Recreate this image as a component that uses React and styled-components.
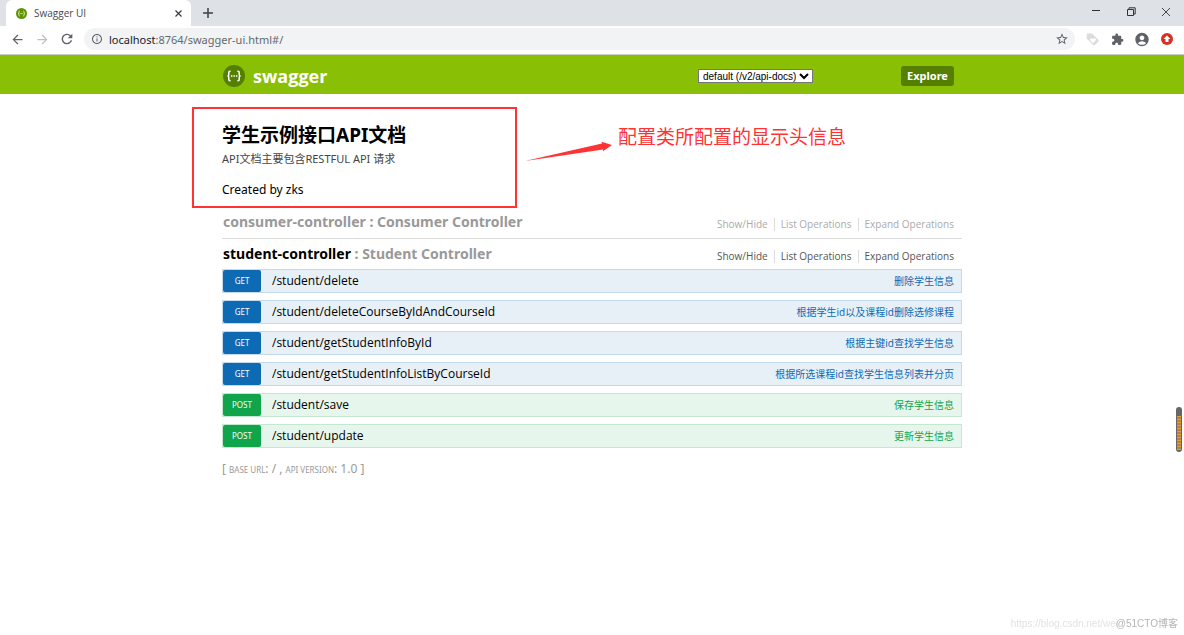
import { useState } from "react";
import styled, { createGlobalStyle } from "styled-components";
import { MdArrowBack, MdArrowForward, MdRefresh, MdInfoOutline, MdStarBorder, MdExtension, MdAccountCircle } from "react-icons/md";

const GlobalStyle = createGlobalStyle`
  * {
    box-sizing: border-box;
  }
  body {
    margin: 0;
    background: #fff;
    color: #000;
    font-family: "Noto Sans", "Noto Sans CJK SC", sans-serif;
  }
  a {
    color: inherit;
    text-decoration: none;
  }
  button {
    border: 0;
    padding: 0;
    background: none;
    color: inherit;
    font: inherit;
  }
`;

/* browser window */
const TabStrip = styled.div`
  display: flex;
  align-items: flex-start;
  height: 26px;
  padding-left: 6px;
  background: #dee1e6;
`;

const Tab = styled.div`
  display: flex;
  align-items: center;
  gap: 7px;
  width: 185px;
  height: 26px;
  padding: 0 8px 0 10px;
  border-radius: 6px 6px 0 0;
  background: #fff;
  color: #45494d;
  font-family: "Open Sans", sans-serif;
  font-size: 10px;
`;

const TabTitle = styled.span`
  flex: 1;
`;

const IconButton = styled.button`
  display: flex;
  align-items: center;
  justify-content: center;
  width: ${({ $width }) => $width || 16}px;
  height: 26px;
  color: ${({ $color }) => $color || "#5f6368"};
`;

const WindowButtons = styled.div`
  display: flex;
  gap: 19px;
  margin-left: auto;
  padding-right: 10px;
`;

const AddressBar = styled.div`
  display: flex;
  align-items: center;
  gap: 9px;
  height: 29px;
  padding: 0 9px 2px;
  border-bottom: 1px solid #c9cdc4;
`;

const Omnibox = styled.div`
  display: flex;
  flex: 1;
  align-items: center;
  gap: 6px;
  height: 22px;
  padding: 0 6px 0 7px;
  border-radius: 11px;
  background: #f1f3f4;
  color: #5f6368;
`;

const Url = styled.span`
  flex: 1;
  color: #65696d;
  font-size: 11px;

  b {
    color: #202124;
    font-weight: 400;
  }
`;

/* swagger page */
const Header = styled.header`
  background: #89bf04;
`;

const Wrap = styled.div`
  width: 740px;
  max-width: 100%;
  margin: 0 auto;
`;

const HeaderRow = styled(Wrap)`
  display: flex;
  align-items: center;
  height: 39px;
  padding: 3px 8px 0 1px;
`;

const Logo = styled.a`
  display: flex;
  flex: 1;
  align-items: center;
  gap: 8px;
  color: #fff;
  font-family: "Open Sans", sans-serif;
  font-size: 18px;
  font-weight: 700;
  line-height: 22px;
`;

const SpecSelect = styled.select`
  height: 14px;
  width: 115px;
  margin-right: 88px;
  padding: 0;
  border: 1px solid #767676;
  border-radius: 0;
  background: #fff;
  color: #000;
  font-family: "Liberation Sans", sans-serif;
  font-size: 10px;
`;

const ExploreButton = styled.button`
  width: 53px;
  height: 20px;
  border-radius: 3px;
  background: #547f00;
  color: #fff;
  font-size: 11px;
  font-weight: 700;
  line-height: 18px;
`;

const InfoRow = styled(Wrap)`
  position: relative;
  padding-top: 28px;
`;

const Info = styled.section`
  height: 89px;
`;

const Title = styled.h1`
  margin: 0;
  font-size: 19px;
  font-weight: 700;
  line-height: 26px;
`;

const Description = styled.p`
  margin: 3px 0 0;
  color: #444;
  font-size: 11px;
  line-height: 16px;
`;

const Author = styled.p`
  margin: 15px 0 0;
  font-size: 12px;
  line-height: 16px;
`;

const Frame = styled.div`
  position: absolute;
  top: 13px;
  left: -30px;
  width: 325px;
  height: 101px;
  border: 2px solid #f33;
`;

const Callout = styled.div`
  position: absolute;
  top: 29px;
  left: 302px;
  display: flex;
  gap: 5px;
  color: #f33;
  font-size: 19px;
  line-height: 28px;
  white-space: nowrap;
`;

const Resource = styled.section`
  padding-top: 1px;
  border-bottom: ${({ $open }) => ($open ? 0 : "1px solid #ddd")};
`;

const ResourceHeading = styled.div`
  display: flex;
  align-items: center;
  justify-content: space-between;
  height: ${({ $open }) => ($open ? 29 : 26)}px;
  padding: 0 0 ${({ $open }) => ($open ? 1 : 6)}px 1px;
  color: #999;
`;

const ResourceName = styled.h2`
  margin: 0;
  font-size: 14px;
  font-weight: 700;
  line-height: 24px;

  a {
    color: ${({ $open }) => ($open ? "#000" : "#999")};
  }
`;

const Options = styled.ul`
  display: flex;
  margin: 4px 0 0;
  padding: 0 2px 0 0;
  list-style: none;
  color: ${({ $open }) => ($open ? "#555" : "#aaa")};
  font-family: "Open Sans", sans-serif;
  font-size: 10px;
  line-height: 13px;

  li {
    padding: 0 6px;
    border-left: 1px solid #ddd;
  }
  li:first-child {
    border-left: 0;
  }
`;

const Operations = styled.ul`
  display: flex;
  flex-direction: column;
  gap: 7px;
  margin: 0;
  padding: 0;
  list-style: none;
`;

const palette = {
  get: { main: "#0f6ab4", back: "#e7f0f7", border: "#c3d9ec" },
  post: { main: "#10a54a", back: "#e7f6ec", border: "#c3e8d1" },
};

const OperationRow = styled.li`
  display: flex;
  align-items: center;
  height: 24px;
  border: 1px solid ${({ $method }) => palette[$method].border};
  background: ${({ $method }) => palette[$method].back};
`;

const Method = styled.a`
  width: 38px;
  border-radius: 2px;
  background: ${({ $method }) => palette[$method].main};
  color: #fff;
  font-size: 8px;
  line-height: 22px;
  text-align: center;
  text-transform: uppercase;
`;

const Path = styled.a`
  flex: 1;
  padding-left: 11px;
  font-family: "Open Sans", sans-serif;
  font-size: 12px;
  line-height: 20px;
`;

const Summary = styled.a`
  padding-right: 7px;
  color: ${({ $method }) => palette[$method].main};
  font-size: 10px;
  line-height: 20px;
`;

const Footer = styled.footer`
  margin-top: 12px;
  color: #999;
  font-size: 12px;
  line-height: 18px;

  span {
    font-size: 8px;
    text-transform: uppercase;
  }
`;

/* overlays */
const Gauge = styled.div`
  position: fixed;
  top: 407px;
  right: 2px;
  width: 6px;
  height: 45px;
  padding: 9px 1px 2px;
  border-radius: 3px;
  background: #666;
`;

const GaugeLevel = styled.div`
  height: 100%;
  background: repeating-linear-gradient(#f0982c 0 1px, #b98244 1px 3px);
`;

const Watermark = styled.div`
  position: fixed;
  right: ${({ $right }) => $right}px;
  bottom: 4px;
  color: ${({ $color }) => $color};
  font-family: "Liberation Sans", "Noto Sans CJK SC", sans-serif;
  font-size: 10px;
  line-height: 14px;
`;

function SwaggerMark({ size, circle }) {
  return (
    <svg width={size} height={size} viewBox="0 0 22 22" fill="none">
      <circle cx="11" cy="11" r="11" fill={circle} />
      <path
        d="M7.6 6.2H7C6 6.2 5.8 6.8 5.8 7.6V9.4C5.8 10.4 5.3 11 4.4 11C5.3 11 5.8 11.6 5.8 12.6V14.4C5.8 15.2 6 15.8 7 15.8H7.6M14.4 6.2H15C16 6.2 16.2 6.8 16.2 7.6V9.4C16.2 10.4 16.7 11 17.6 11C16.7 11 16.2 11.6 16.2 12.6V14.4C16.2 15.2 16 15.8 15 15.8H14.4"
        stroke="#fff"
        strokeWidth="1.5"
      />
      <path d="M7.9 11H14.4" stroke="#fff" strokeWidth="1.5" strokeDasharray="1.5 1" />
    </svg>
  );
}

const resources = [
  { name: "consumer-controller", description: "Consumer Controller", operations: [] },
  {
    name: "student-controller",
    description: "Student Controller",
    open: true,
    operations: [
      { method: "get", path: "/student/delete", summary: "删除学生信息" },
      { method: "get", path: "/student/deleteCourseByIdAndCourseId", summary: "根据学生id以及课程id删除选修课程" },
      { method: "get", path: "/student/getStudentInfoById", summary: "根据主键id查找学生信息" },
      { method: "get", path: "/student/getStudentInfoListByCourseId", summary: "根据所选课程id查找学生信息列表并分页" },
      { method: "post", path: "/student/save", summary: "保存学生信息" },
      { method: "post", path: "/student/update", summary: "更新学生信息" },
    ],
  },
];

function BrowserBar() {
  return (
    <>
      <TabStrip>
        <Tab>
          <SwaggerMark size={11} circle="#5f9300" />
          <TabTitle>Swagger UI</TabTitle>
          <IconButton $width={9} $color="#3c4043" aria-label="Close tab">
            <svg width="7" height="7" viewBox="0 0 7 7" stroke="currentColor" strokeWidth="1.3">
              <path d="M0.5 0.5L6.5 6.5M6.5 0.5L0.5 6.5" />
            </svg>
          </IconButton>
        </Tab>
        <IconButton $width={34} $color="#3c4043" aria-label="New tab">
          <svg width="10" height="10" viewBox="0 0 10 10" stroke="currentColor" strokeWidth="1.5">
            <path d="M5 0V10M0 5H10" />
          </svg>
        </IconButton>
        <WindowButtons>
          <IconButton aria-label="Minimize">
            <svg width="8" height="8" viewBox="0 0 8 8" stroke="#333">
              <path d="M0 1.5H8" />
            </svg>
          </IconButton>
          <IconButton aria-label="Restore">
            <svg width="9" height="12" viewBox="0 0 9 12" fill="none" stroke="#333">
              <path d="M0.5 2.5H6.5V8.5H0.5ZM2 2V0.8H8.2V7H7" />
            </svg>
          </IconButton>
          <IconButton aria-label="Close">
            <svg width="8" height="10" viewBox="0 0 8 10" stroke="#333" strokeWidth="0.9">
              <path d="M0 0L8 8M8 0L0 8" />
            </svg>
          </IconButton>
        </WindowButtons>
      </TabStrip>
      <AddressBar>
        <IconButton aria-label="Back">
          <MdArrowBack size={15} />
        </IconButton>
        <IconButton $color="#bdc1c6" aria-label="Forward">
          <MdArrowForward size={15} />
        </IconButton>
        <IconButton aria-label="Reload">
          <MdRefresh size={16} />
        </IconButton>
        <Omnibox>
          <MdInfoOutline size={12} />
          <Url>
            <b>localhost</b>:8764/swagger-ui.html#/
          </Url>
          <MdStarBorder size={14} />
        </Omnibox>
        <IconButton aria-label="Shopping extension">
          <svg width="13" height="13" viewBox="0 0 13 13">
            <path d="M1.5 0.5H6L12.5 7Q13 7.6 12.5 8.2L8.6 12.3Q8 12.8 7.4 12.3L0.7 5.6V1.5Q0.7 0.5 1.5 0.5Z" fill="#dcdcdc" />
            <path d="M7 10L4.4 7.4C3.2 6 5.3 4.3 7 6C8.7 4.3 10.8 6 9.6 7.4Z" fill="#fff" />
          </svg>
        </IconButton>
        <IconButton aria-label="Extensions">
          <MdExtension size={13} />
        </IconButton>
        <IconButton aria-label="Profile">
          <MdAccountCircle size={17} />
        </IconButton>
        <IconButton aria-label="Update">
          <svg width="12" height="12" viewBox="0 0 12 12">
            <circle cx="6" cy="6" r="6" fill="#d93025" />
            <path d="M6 2.5L9.5 6H7.5V9H4.5V6H2.5Z" fill="#fff" />
          </svg>
        </IconButton>
      </AddressBar>
    </>
  );
}

function ResourceSection({ name, description, open, operations }) {
  return (
    <Resource $open={open}>
      <ResourceHeading $open={open}>
        <ResourceName $open={open}>
          <a href={`#/${name}`}>{name}</a> : {description}
        </ResourceName>
        <Options $open={open}>
          <li>
            <a href="#show">Show/Hide</a>
          </li>
          <li>
            <a href="#list">List Operations</a>
          </li>
          <li>
            <a href="#expand">Expand Operations</a>
          </li>
        </Options>
      </ResourceHeading>
      {open && (
        <Operations>
          {operations.map(({ method, path, summary }) => (
            <OperationRow key={path} $method={method}>
              <Method href={`#${path}`} $method={method}>
                {method}
              </Method>
              <Path href={`#${path}`}>{path}</Path>
              <Summary href={`#${path}`} $method={method}>
                {summary}
              </Summary>
            </OperationRow>
          ))}
        </Operations>
      )}
    </Resource>
  );
}

export default function App() {
  const [spec, setSpec] = useState("default");

  return (
    <>
      <GlobalStyle />
      <BrowserBar />
      <Header>
        <HeaderRow>
          <Logo href="#swagger">
            <SwaggerMark size={22} circle="#547f00" />
            swagger
          </Logo>
          <SpecSelect aria-label="API spec" value={spec} onChange={(event) => setSpec(event.target.value)}>
            <option value="default">default (/v2/api-docs)</option>
          </SpecSelect>
          <ExploreButton type="button">Explore</ExploreButton>
        </HeaderRow>
      </Header>
      <InfoRow>
        <Info>
          <Title>学生示例接口API文档</Title>
          <Description>API文档主要包含RESTFUL API 请求</Description>
          <Author>Created by zks</Author>
        </Info>
        <Frame />
        <Callout>
          <svg width="89" height="40" viewBox="0 0 89 40" fill="#f33">
            <path d="M1 38L78 20.5L77.5 18.7L88 22L79 28.3V26.5Z" />
          </svg>
          配置类所配置的显示头信息
        </Callout>
      </InfoRow>
      <Wrap as="main">
        {resources.map((resource) => (
          <ResourceSection key={resource.name} {...resource} />
        ))}
        <Footer>
          [ <span>base url</span>: / , <span>api version</span>: 1.0 ]
        </Footer>
      </Wrap>
      <Gauge>
        <GaugeLevel />
      </Gauge>
      <Watermark $right={66} $color="#e3e3e3">
        https://blog.csdn.net/wei
      </Watermark>
      <Watermark $right={6} $color="#b5b5b5">
        @51CTO博客
      </Watermark>
    </>
  );
}
